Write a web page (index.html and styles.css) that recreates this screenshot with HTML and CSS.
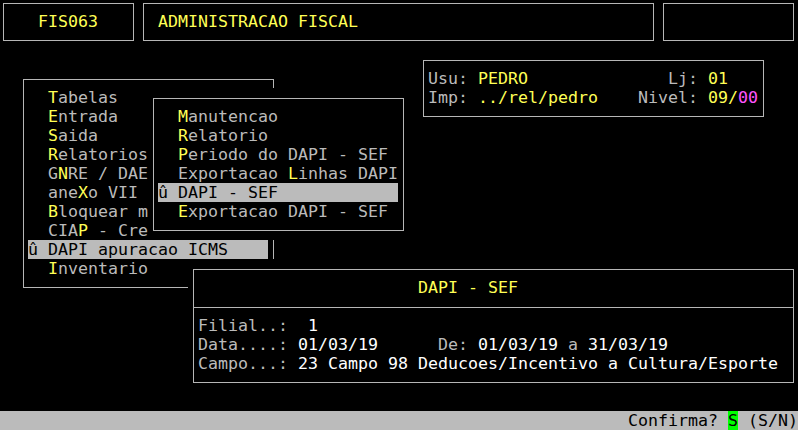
FILE: index.html
```html
<!DOCTYPE html>
<html lang="pt">
<head>
  <meta charset="UTF-8" />
  <title>FIS063 - Administracao Fiscal</title>
  <link rel="stylesheet" href="styles.css">
</head>
<body>
  <div class="desk">
    <div class="win head-code"><div class="ln">   <span class="y">FIS063</span></div></div>
    <div class="win head-title"><div class="ln"> <span class="y">ADMINISTRACAO FISCAL</span></div></div>
    <div class="win head-blank"><div class="ln"> </div></div>

    <div class="win user">
      <div class="ln">Usu: <span class="y">PEDRO</span>              Lj: <span class="y">01</span></div>
      <div class="ln">Imp: <span class="y">../rel/pedro</span>    Nivel: <span class="y">09/</span><span class="m">00</span></div>
    </div>

    <div class="win menu">
      <div class="ln">  <span class="y">T</span>abelas</div>
      <div class="ln">  <span class="y">E</span>ntrada</div>
      <div class="ln">  <span class="y">S</span>aida</div>
      <div class="ln">  <span class="y">R</span>elatorios</div>
      <div class="ln">  G<span class="y">N</span>RE / DAE</div>
      <div class="ln">  ane<span class="y">X</span>o VII</div>
      <div class="ln">  <span class="y">B</span>loquear m</div>
      <div class="ln">  CIA<span class="y">P</span> - Cre</div>
      <div class="ln sel">û DAPI apuracao ICMS</div>
      <div class="ln">  <span class="y">I</span>nventario</div>
    </div>

    <div class="win submenu">
      <div class="ln">  <span class="y">M</span>anutencao</div>
      <div class="ln">  <span class="y">R</span>elatorio</div>
      <div class="ln">  <span class="y">P</span>eriodo do DAPI - SEF</div>
      <div class="ln">  Exportacao <span class="y">L</span>inhas DAPI</div>
      <div class="ln sel">û DAPI - SEF</div>
      <div class="ln">  <span class="y">E</span>xportacao DAPI - SEF</div>
    </div>

    <div class="win dapi">
      <div class="ln">                      <span class="y">DAPI - SEF</span></div>
      <div class="sep"></div>
      <div class="ln">Filial..:  <span class="w">1</span></div>
      <div class="ln">Data....: <span class="w">01/03/19</span>      De: <span class="w">01/03/19</span> a <span class="w">31/03/19</span></div>
      <div class="ln">Campo...: <span class="w">23 Campo 98 Deducoes/Incentivo a Cultura/Esporte</span></div>
    </div>
  </div>

  <div class="status">Confirma? <span class="ok">S</span> (S/N)</div>
</body>
</html>
```

FILE: styles.css
```css
body {
  margin: 0;
  background: #000;
  color: #bbbbbb;
  font-family: "DejaVu Sans Mono", monospace;
  font-size: 16.61px;
  line-height: 19px;
  overflow: hidden;
}

.desk {
  position: relative;
  height: 411px;
  overflow: hidden;
}

/* each window covers whole character cells, the frame runs through the middle of the edge cells */
.win {
  position: absolute;
  background: #000;
  padding: 19px 10px;
}

.win::before {
  content: "";
  position: absolute;
  left: 5px;
  right: 4px;
  top: 10px;
  bottom: 9px;
  border: 1px solid #b6b6b6;
}

.ln {
  height: 19px;
  white-space: pre;
}

.head-code {
  left: -2px;
  top: -7px;
  width: 120px;
}

.head-title {
  left: 138px;
  top: -7px;
  width: 500px;
}

.head-blank {
  left: 658px;
  top: -7px;
  width: 120px;
}

.user {
  left: 418px;
  top: 50px;
  width: 330px;
}

.menu {
  left: 18px;
  top: 69px;
  width: 240px;
}

.submenu {
  left: 148px;
  top: 88px;
  width: 240px;
}

.dapi {
  left: 188px;
  top: 259px;
  width: 590px;
}

.sep {
  height: 10px;
  margin: 0 -6px 8px -5px;
  border-bottom: 1px solid #b6b6b6;
}

.sel {
  background: #bbbbbb;
  color: #000;
}

.y {
  color: #ffff55;
}

.m {
  color: #ff55ff;
}

.w {
  color: #ffffff;
}

.status {
  height: 19px;
  background: #bbbbbb;
  color: #000;
  text-align: right;
  white-space: pre;
}

.ok {
  background: #00ff00;
}
```
